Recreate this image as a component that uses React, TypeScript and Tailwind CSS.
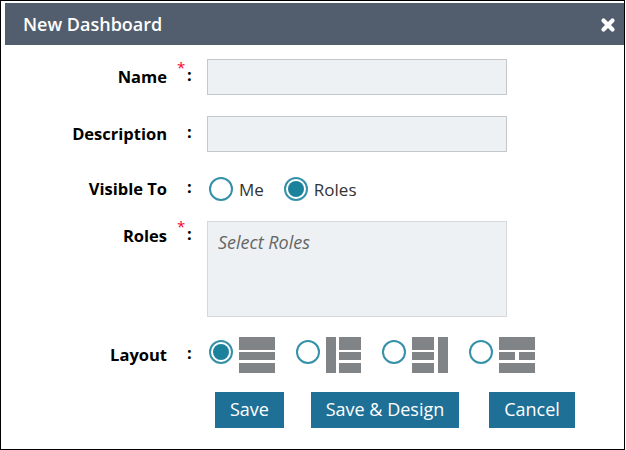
const font = "font-['Open_Sans',sans-serif]";

function Radio({ checked = false }: { checked?: boolean }) {
  return (
    <span className="flex h-6 w-6 shrink-0 items-center justify-center rounded-full border-[2.5px] border-[#3591a7] bg-white">
      {checked && <span className="h-4 w-4 rounded-full bg-[#1c829c]" />}
    </span>
  );
}

function FieldLabel({ text, required = false }: { text: string; required?: boolean }) {
  return (
    <div className="relative flex w-[186px] shrink-0 justify-end text-[16.5px] font-bold leading-[22px] text-black">
      <span>{text}</span>
      {required && (
        <span className="absolute left-[172px] top-[-9px] text-[15px] font-normal leading-[20px] text-[#f5002f]">*</span>
      )}
      <span className="ml-[20px] w-[4px] -translate-y-0.5 text-left">:</span>
    </div>
  );
}

function LayoutIcon({ children }: { children: React.ReactNode }) {
  return (
    <svg width="36" height="36" viewBox="0 0 36 36" className="shrink-0 fill-[#808487]">
      {children}
    </svg>
  );
}

function Button({ text, width }: { text: string; width: string }) {
  return (
    <button className={`h-9 ${width} bg-[#1f7097] pb-0.5 text-center text-[18px] leading-8 text-white`}>{text}</button>
  );
}

export default function App() {
  return (
    <div className={`${font} h-[450px] w-[625px] overflow-hidden border border-black bg-white pt-0.5 pl-1`}>
      <div className="flex h-[42px] items-center justify-between bg-[#525e6d] pl-[18px] pr-2 text-white">
        <h1 className="text-[18px] font-semibold">New Dashboard</h1>
        <svg width="16" height="16" viewBox="0 0 16 16" className="mt-[1px]">
          <path d="M3.5 3.5 12.5 12.5M12.5 3.5 3.5 12.5" stroke="white" strokeWidth="4.2" strokeLinecap="round" />
        </svg>
      </div>
      <div className="pt-[14px]">
        <div className="flex h-9 items-center">
          <FieldLabel text="Name" required />
          <div className="ml-[16px] h-9 w-[300px] border border-[#c3c8cc] bg-[#edf1f4]" />
        </div>
        <div className="mt-[21px] flex h-9 items-center">
          <FieldLabel text="Description" />
          <div className="ml-[16px] h-9 w-[300px] border border-[#c3c8cc] bg-[#edf1f4]" />
        </div>
        <div className="mt-[25px] flex h-6 items-center">
          <FieldLabel text="Visible To" />
          <div className="ml-[18px] flex items-center text-[17px] text-[#333]">
            <Radio />
            <span className="ml-1.5 translate-y-px">Me</span>
            <span className="ml-[20px]"><Radio checked /></span>
            <span className="ml-1.5 translate-y-px">Roles</span>
          </div>
        </div>
        <div className="mt-5 flex h-24">
          <div className="pt-1"><FieldLabel text="Roles" required /></div>
          <div className="ml-[16px] h-24 w-[300px] border border-[#d5d9dc] bg-[#edf1f4] px-2.5 py-2 text-[18px] italic leading-[24px] text-[#666]">
            Select Roles
          </div>
        </div>
        <div className="mt-5 flex h-9 items-center">
          <FieldLabel text="Layout" />
          <div className="ml-[18px] flex items-center">
            <span className="mb-1.5"><Radio checked /></span>
            <span className="ml-1.5">
              <LayoutIcon>
                <rect width="36" height="13" />
                <rect y="15" width="36" height="8" />
                <rect y="26" width="36" height="10" />
              </LayoutIcon>
            </span>
            <span className="mb-1.5 ml-[21px]"><Radio /></span>
            <span className="ml-1.5">
              <LayoutIcon>
                <rect width="10" height="36" />
                <rect x="13" width="22" height="13" />
                <rect x="13" y="15" width="22" height="8" />
                <rect x="13" y="26" width="22" height="10" />
              </LayoutIcon>
            </span>
            <span className="mb-1.5 ml-[20px]"><Radio /></span>
            <span className="ml-1.5">
              <LayoutIcon>
                <rect width="22" height="13" />
                <rect y="15" width="22" height="8" />
                <rect y="26" width="22" height="10" />
                <rect x="26" width="10" height="36" />
              </LayoutIcon>
            </span>
            <span className="mb-1.5 ml-[21px]"><Radio /></span>
            <span className="ml-1.5">
              <LayoutIcon>
                <rect width="36" height="13" />
                <rect y="15" width="16" height="8" />
                <rect x="20" y="15" width="16" height="8" />
                <rect y="26" width="36" height="10" />
              </LayoutIcon>
            </span>
          </div>
        </div>
        <div className="mt-[19px] flex pl-[210px]">
          <Button text="Save" width="w-[69px]" />
          <span className="ml-[27px]"><Button text="Save & Design" width="w-[148px]" /></span>
          <span className="ml-[30px]"><Button text="Cancel" width="w-[86px]" /></span>
        </div>
      </div>
    </div>
  );
}
